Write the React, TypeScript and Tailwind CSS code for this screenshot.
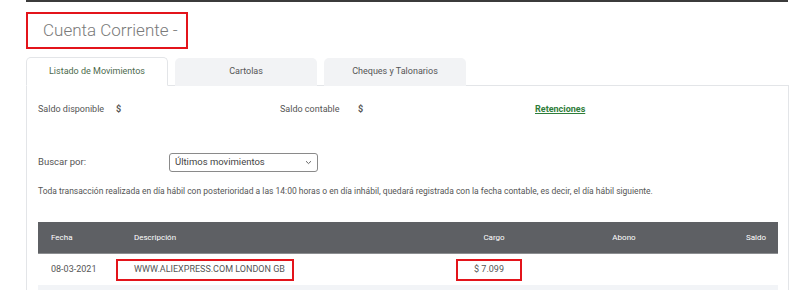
import React from "react";

export default function App() {
  return (
    <div className="w-[800px] h-[290px] bg-white overflow-hidden font-['Roboto',sans-serif] text-[#555]">
      <div className="ml-[26px] w-[762px] h-[2px] bg-[#3b3b3b]" />
      <div className="ml-[26px] mt-[10px] w-[162px] h-[37px] border-2 border-[#e3141b] flex items-center pl-[15px] text-[17px] font-light text-[#7a7a7a] leading-none">
        Cuenta Corriente -
      </div>
      <div className="ml-[26px] mt-[8px] flex gap-[7px] h-[29px] items-end">
        <div className="relative z-10 w-[142px] h-[29px] bg-white border border-[#e3e5e8] border-b-white rounded-t-[5px] flex items-center justify-center text-[9px] text-[#4d6a4d]">
          Listado de Movimientos
        </div>
        <div className="w-[142px] h-[28px] bg-[#f2f3f5] rounded-t-[5px] flex items-center justify-center text-[9px] text-[#555]">
          Cartolas
        </div>
        <div className="w-[142px] h-[28px] bg-[#f2f3f5] rounded-t-[5px] flex items-center justify-center text-[9px] text-[#555]">
          Cheques y Talonarios
        </div>
      </div>
      <div className="ml-[26px] -mt-px w-[763px] h-[220px] border border-[#e3e5e8] pl-[11px] pr-[11px]">
        <div className="mt-[17px] flex items-center h-[14px] text-[9px] text-[#555]">
          <span className="w-[78px]">Saldo disponible</span>
          <span className="w-[164px] font-bold">$</span>
          <span className="w-[78px]">Saldo contable</span>
          <span className="w-[177px] font-bold">$</span>
          <span className="font-bold text-[#2f7d3a] underline">Retenciones</span>
        </div>
        <div className="mt-[36px] flex items-center h-[19px] text-[9.5px]">
          <span className="w-[131px] text-[#555]">Buscar por:</span>
          <div className="w-[149px] h-[19px] border border-[#8a8a8a] rounded-[3px] flex items-center justify-between pl-[5px] pr-[5px] text-[#444]">
            <span>Últimos movimientos</span>
            <svg width="7" height="5" viewBox="0 0 7 5" fill="none">
              <path d="M1 1.2 L3.5 3.6 L6 1.2" stroke="#666" strokeWidth="1" />
            </svg>
          </div>
        </div>
        <div className="mt-[12px] h-[14px] flex items-center text-[8.5px] text-[#555] whitespace-nowrap">
          Toda transacción realizada en día hábil con posterioridad a las 14:00 horas o en día inhábil, quedará registrada con la fecha contable, es decir, el día hábil siguiente.
        </div>
        <div className="mt-[24px] w-[740px]">
          <div className="flex h-[32px] items-center bg-[#5e6064] text-white text-[8px] border-b border-[#8c8e91]">
            <div className="w-[83px] pl-[13px]">Fecha</div>
            <div className="w-[300px] pl-[13px]">Descripción</div>
            <div className="w-[146px] text-center">Cargo</div>
            <div className="w-[114px] text-center">Abono</div>
            <div className="w-[97px] text-right pr-[12px]">Saldo</div>
          </div>
          <div className="flex h-[31px] items-center text-[9px] text-[#555]">
            <div className="w-[83px] pl-[13px]">08-03-2021</div>
            <div className="w-[300px]">
              <div className="-ml-[5px] w-[178px] h-[22px] border-2 border-[#e3141b] flex items-center pl-[16px]">
                WWW.ALIEXPRESS.COM LONDON GB
              </div>
            </div>
            <div className="w-[146px]">
              <div className="ml-[35px] w-[66px] h-[22px] border-2 border-[#e3141b] flex items-center justify-center">
                $ 7.099
              </div>
            </div>
            <div className="w-[114px]" />
            <div className="w-[97px]" />
          </div>
          <div className="h-[20px] bg-[#f2f4f7]" />
        </div>
      </div>
    </div>
  );
}
